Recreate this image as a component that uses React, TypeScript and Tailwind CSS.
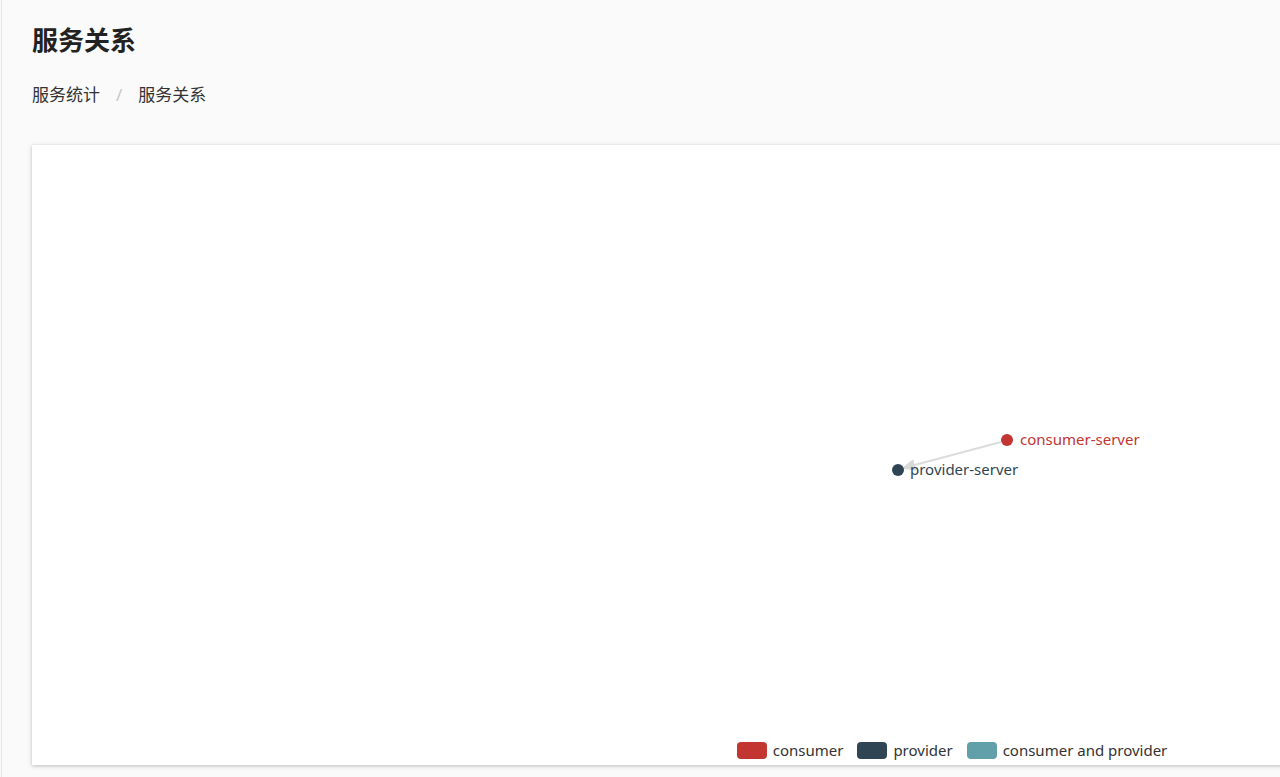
import React from 'react';

const FONT = { fontFamily: '"Noto Sans", "Noto Sans CJK SC", sans-serif' };

const legend = [
    { name: 'consumer', color: 'bg-[#c23531]' },
    { name: 'provider', color: 'bg-[#2f4554]' },
    { name: 'consumer and provider', color: 'bg-[#61a0a8]' },
];

function RelationGraph() {
    // node coordinates are relative to the card
    const consumer = { x: 975, y: 295 };
    const provider = { x: 866, y: 325 };

    return (
        <svg width="1840" height="580" className="block">
            <defs>
                <marker id="arrow" markerWidth="8" markerHeight="8" refX="4" refY="4" orient="auto">
                    <path d="M0,1 L7,4 L0,7 Z" fill="#d9d9d9" />
                </marker>
            </defs>
            <line
                x1={consumer.x - 6}
                y1={consumer.y + 2}
                x2={provider.x + 9}
                y2={provider.y - 3}
                stroke="#dcdcdc"
                strokeWidth="2"
                markerEnd="url(#arrow)"
            />
            <circle cx={consumer.x} cy={consumer.y} r="6" fill="#c23531" />
            <circle cx={provider.x} cy={provider.y} r="6" fill="#2f4554" />
            <text x={consumer.x + 13} y={consumer.y + 5} fontSize="15" fill="#c23531" style={FONT}>
                consumer-server
            </text>
            <text x={provider.x + 12} y={provider.y + 5} fontSize="15" fill="#2f4554" style={FONT}>
                provider-server
            </text>
        </svg>
    );
}

export default function App() {
    return (
        <div className="h-[777px] overflow-hidden bg-[#fafafa]" style={FONT}>
            <div className="ml-px h-full border-l border-[#e6e6e6] pl-[30px] pt-6">
                {/* Header */}
                <h1 className="text-[26px] leading-8 font-bold text-[#222]">服务关系</h1>
                <div className="mt-[27px] flex items-center text-[17px] leading-6 text-[#333]">
                    <span>服务统计</span>
                    <span className="px-[16px] text-[#c8c8c8]">/</span>
                    <span>服务关系</span>
                </div>

                {/* Card */}
                <div className="mt-[38px] h-[620px] w-[1840px] bg-white shadow-[0_1px_4px_rgba(0,0,0,0.25)] flex flex-col">
                    <RelationGraph />
                    <div className="flex justify-center items-center gap-[14px] mt-[14px] text-[15px] text-[#333]">
                        {legend.map(item => (
                            <div key={item.name} className="flex items-center gap-[6px]">
                                <span className={`h-[17px] w-[30px] rounded-[4px] ${item.color}`} />
                                <span>{item.name}</span>
                            </div>
                        ))}
                    </div>
                </div>
            </div>
        </div>
    );
}
